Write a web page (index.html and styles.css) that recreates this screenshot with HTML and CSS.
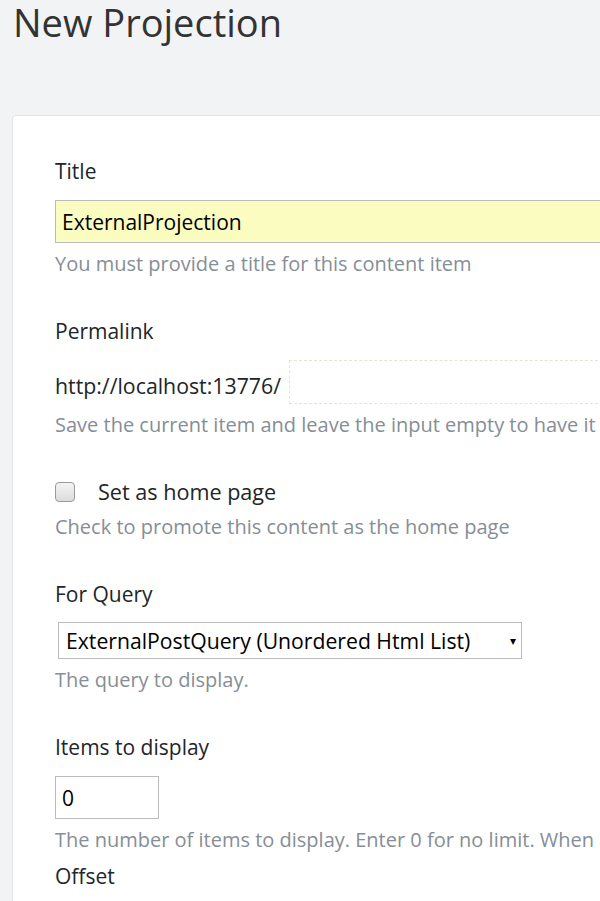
FILE: index.html
```html
<!DOCTYPE html>
<html>
<head>
<meta charset="utf-8">
<title>New Projection</title>
<link rel="stylesheet" href="styles.css">
</head>
<body>
<h1 class="page-title">New Projection</h1>
<div class="card">
  <div class="field">
    <label class="label">Title</label>
    <input class="text-input title-input" type="text" value="ExternalProjection">
    <div class="hint">You must provide a title for this content item</div>
  </div>
  <div class="field">
    <label class="label">Permalink</label>
    <div class="permalink-row">
      <span class="prefix">http://localhost:13776/</span>
      <input class="permalink-input" type="text" value="">
    </div>
    <div class="hint">Save the current item and leave the input empty to have it generated using the pattern</div>
  </div>
  <div class="field">
    <div class="check-row">
      <span class="checkbox"></span>
      <span class="check-label">Set as home page</span>
    </div>
    <div class="hint">Check to promote this content as the home page</div>
  </div>
  <div class="field">
    <label class="label">For Query</label>
    <div class="select">
      <span class="select-text">ExternalPostQuery (Unordered Html List)</span>
      <span class="select-arrow">&#9662;</span>
    </div>
    <div class="hint">The query to display.</div>
  </div>
  <div class="field field-tight">
    <label class="label">Items to display</label>
    <input class="text-input small-input" type="text" value="0">
    <div class="hint nowrap">The number of items to display. Enter 0 for no limit. When using pagination, this is the number of items per page.</div>
  </div>
  <div class="field">
    <label class="label">Offset</label>
  </div>
</div>
</body>
</html>
```

FILE: styles.css
```css
html, body {
  margin: 0;
  padding: 0;
}
body {
  background: #f2f3f5;
  font-family: "Open Sans", "Noto Sans", sans-serif;
  font-size: 20px;
  line-height: 28px;
  color: #212529;
  overflow: hidden;
  width: 600px;
  height: 901px;
}
.page-title {
  margin: 0;
  padding: 0 0 0 13px;
  font-size: 38px;
  line-height: 44px;
  font-weight: 400;
  color: #333;
}
.card {
  margin: 71px 0 0 12px;
  width: 1200px;
  background: #fff;
  border: 1px solid #e2e3e5;
  border-radius: 4px;
  padding: 41px 0 0 42px;
}
.field {
  margin-bottom: 39px;
}
.field-tight {
  margin-bottom: 8px;
}
.label {
  display: block;
  font-size: 21px;
  margin-bottom: 15px;
}
.text-input {
  display: block;
  box-sizing: border-box;
  height: 43px;
  border: 1px solid #bbb;
  font: inherit;
  font-size: 21px;
  color: #000;
  padding: 0 6px;
  margin: 0;
}
.title-input {
  width: 900px;
  background: #fafcc0;
}
.small-input {
  width: 104px;
  background: #fff;
}
.hint {
  margin-top: 7px;
  color: #868e96;
}
.nowrap {
  white-space: nowrap;
}
.permalink-row {
  display: flex;
  align-items: center;
}
.prefix {
  font-size: 21.3px;
  padding-top: 8px;
}
.permalink-input {
  box-sizing: border-box;
  height: 44px;
  width: 700px;
  margin-left: 8px;
  border: 1px dashed #e6e3d6;
  background: #fff;
}
.check-row {
  display: flex;
  align-items: center;
}
.checkbox {
  box-sizing: border-box;
  width: 20px;
  height: 20px;
  border: 1px solid #9a9a9a;
  border-radius: 4px;
  background: linear-gradient(#f4f4f4, #dcdcdc);
  margin-right: 23px;
}
.check-label {
  font-size: 21.6px;
}
.select {
  box-sizing: border-box;
  width: 464px;
  height: 37px;
  margin-left: 3px;
  margin-top: -1px;
  border: 1px solid #bbb;
  display: flex;
  align-items: center;
  justify-content: space-between;
  padding: 0 5px 0 7px;
  color: #000;
  font-size: 21.2px;
}
.select-arrow {
  font-size: 12px;
}
```
